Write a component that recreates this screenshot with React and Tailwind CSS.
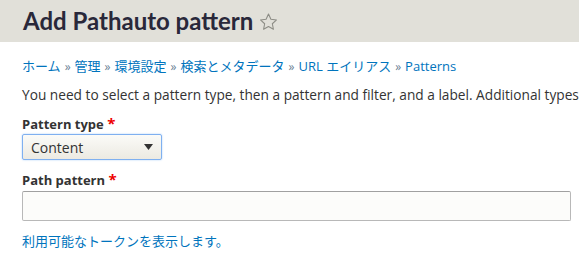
import React from 'react';

const Star = () => (
  <svg width="21" height="20" viewBox="0 0 24 24" className="ml-[5px] mt-[2px]" fill="none" stroke="#8c8c85" strokeWidth="1.3" strokeLinejoin="round">
    <path d="M12 2.5l2.9 6.2 6.7.8-5 4.6 1.3 6.6L12 17.4l-5.9 3.3 1.3-6.6-5-4.6 6.7-.8z" />
  </svg>
);

const crumbs = ['ホーム', '管理', '環境設定', '検索とメタデータ', 'URL エイリアス'];

const App = () => {
  return (
    <div className="w-[579px] h-[253px] overflow-hidden bg-white text-[#333] font-['Open_Sans','Noto_Sans_CJK_JP',sans-serif]">
      {/* page title */}
      <div className="h-[42px] bg-[#e1e0d9] flex items-center px-[23px]">
        <h1 className="text-[24px] font-bold text-[#29283a] leading-none font-['Lato','Noto_Sans_CJK_JP',sans-serif]">
          Add Pathauto pattern
        </h1>
        <Star />
      </div>

      <div className="px-[22px]">
        {/* breadcrumb */}
        <div className="mt-[15px] text-[13px] leading-[18px] text-[#0074bd] whitespace-nowrap">
          {crumbs.map((c) => (
            <span key={c}>
              <a href="#">{c}</a>
              <span className="text-[#6b7f95] text-[12px] mx-[4px]">»</span>
            </span>
          ))}
          <a href="#">Patterns</a>
        </div>

        <p className="mt-[10px] text-[13.7px] leading-[18px] whitespace-nowrap">
          You need to select a pattern type, then a pattern and filter, and a label. Additional types can be enabled on the Settings page.
        </p>

        {/* pattern type */}
        <div className="mt-[11px]">
          <label className="block text-[13px] font-bold leading-[16px]">
            Pattern type <span className="text-[#e00] text-[15px]">*</span>
          </label>
          <div className="mt-[2px] w-[140px] h-[26px] border border-[#7fb0f0] rounded-[2px] bg-gradient-to-b from-[#fbfbf8] to-[#eceae2] flex items-center justify-between pl-[8px] pr-[8px] shadow-[0_0_2px_#a9cdf8]">
            <span className="text-[14px]">Content</span>
            <svg width="9" height="6" viewBox="0 0 9 6"><path d="M0 0h9L4.5 6z" fill="#333" /></svg>
          </div>
        </div>

        {/* path pattern */}
        <div className="mt-[11px]">
          <label className="block text-[13px] font-bold leading-[16px]">
            Path pattern <span className="text-[#e00] text-[15px]">*</span>
          </label>
          <input
            type="text"
            className="mt-[3px] block w-[549px] h-[30px] border border-[#b8b8b8] border-t-[#a0a0a0] rounded-[2px] bg-[#fcfcfa] outline-none"
          />
        </div>

        <a href="#" className="block mt-[11px] text-[13px] leading-[18px] text-[#0074bd]">
          利用可能なトークンを表示します。
        </a>
      </div>
    </div>
  );
};

export default App;
